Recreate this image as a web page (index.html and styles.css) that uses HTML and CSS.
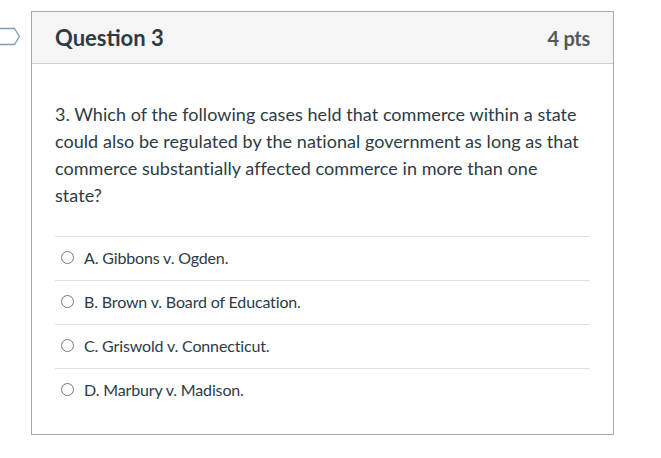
FILE: index.html
```html
<!DOCTYPE html>
<html>
<head>
<meta charset="utf-8">
<link rel="stylesheet" href="styles.css">
</head>
<body>
<div class="page">
  <svg class="flag" width="22" height="22" viewBox="0 0 22 22">
    <path d="M-2 1.5 H14.5 L19.3 9.5 L14.5 17.5 H-2" fill="none" stroke="#7f9fb3" stroke-width="1.3"/>
  </svg>
  <div class="card">
    <div class="header">
      <span class="title">Question 3</span>
      <span class="pts">4 pts</span>
    </div>
    <div class="body">
      <p class="question">3. Which of the following cases held that commerce within a state could also be regulated by the national government as long as that commerce substantially affected commerce in more than one state?</p>
      <div class="answers">
        <label class="answer"><span class="radio"></span>A. Gibbons v. Ogden.</label>
        <label class="answer"><span class="radio"></span>B. Brown v. Board of Education.</label>
        <label class="answer"><span class="radio"></span>C. Griswold v. Connecticut.</label>
        <label class="answer"><span class="radio"></span>D. Marbury v. Madison.</label>
      </div>
    </div>
  </div>
</div>
</body>
</html>
```
FILE: styles.css
```css
html, body {
  margin: 0;
  padding: 0;
  background: #fff;
}
body {
  font-family: Lato, "Open Sans", sans-serif;
  color: #2d3b45;
}
.page {
  position: relative;
  padding: 11px 0 0 31px;
}
.flag {
  position: absolute;
  left: 0;
  top: 27px;
}
.card {
  width: 583px;
  box-sizing: border-box;
  border: 1px solid #aaaaaa;
}
.header {
  height: 52px;
  box-sizing: border-box;
  background: #f5f5f5;
  border-bottom: 1px solid #c7cdd1;
  display: flex;
  align-items: center;
  justify-content: space-between;
  padding: 0 23px 0 23px;
}
.title {
  font-size: 22px;
  font-weight: 700;
}
.pts {
  font-size: 20px;
  font-weight: 700;
  color: #52595e;
  letter-spacing: -0.3px;
}
.body {
  padding: 37px 23px 22px 23px;
}
.question {
  margin: 0 0 27px 0;
  max-width: 528px;
  font-size: 18px;
  line-height: 27px;
  letter-spacing: 0.05px;
}
.answers {
  border-top: 1px solid #dfe2e4;
}
.answer {
  display: flex;
  align-items: center;
  height: 44px;
  box-sizing: border-box;
  padding: 0 0 2px 6px;
  font-size: 16px;
  letter-spacing: -0.15px;
  border-bottom: 1px solid #dfe2e4;
}
.answer:last-child {
  border-bottom: none;
  height: 43px;
}
.radio {
  width: 11px;
  height: 11px;
  border: 1px solid #777;
  border-radius: 50%;
  margin-right: 10px;
  flex: none;
}
```
